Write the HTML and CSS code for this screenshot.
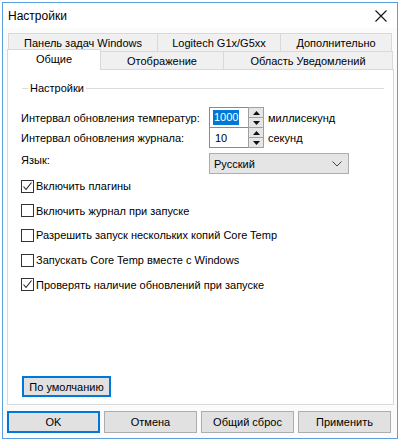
FILE: index.html
```html
<!DOCTYPE html>
<html lang="ru">
<head>
<meta charset="utf-8">
<title>Настройки</title>
<link rel="stylesheet" href="styles.css">
</head>
<body>
<div class="window">
  <div class="titlebar">
    <span class="title">Настройки</span>
    <svg class="close" width="12" height="12" viewBox="0 0 12 12"><path d="M0.5 0.5 L11.5 11.5 M11.5 0.5 L0.5 11.5" stroke="#111" stroke-width="1.1" fill="none"/></svg>
  </div>
  <div class="tabs">
    <div class="tabrow row1">
      <div class="tab w150">Панель задач Windows</div>
      <div class="tab w123">Logitech G1x/G5xx</div>
      <div class="tab w111">Дополнительно</div>
    </div>
    <div class="tabrow row2">
      <div class="tab active w93">Общие</div>
      <div class="tab w123">Отображение</div>
      <div class="tab w168">Область Уведомлений</div>
    </div>
    <div class="panel">
      <div class="group-head"><span class="gline short"></span><span class="glabel">Настройки</span><span class="gline"></span></div>
      <div class="frow first">
        <span class="flabel">Интервал обновления температур:</span>
        <div class="spin">
          <div class="edit"><span class="sel">1000</span></div>
          <div class="spinbtns">
            <div class="sb"><svg width="7" height="4" viewBox="0 0 7 4"><path d="M0 4 L3.5 0 L7 4 Z" fill="#111"/></svg></div>
            <div class="sb"><svg width="7" height="4" viewBox="0 0 7 4"><path d="M0 0 L3.5 4 L7 0 Z" fill="#111"/></svg></div>
          </div>
        </div>
        <span class="unit">миллисекунд</span>
      </div>
      <div class="frow second">
        <span class="flabel">Интервал обновления журнала:</span>
        <div class="spin">
          <div class="edit"><span class="val">10</span></div>
          <div class="spinbtns">
            <div class="sb"><svg width="7" height="4" viewBox="0 0 7 4"><path d="M0 4 L3.5 0 L7 4 Z" fill="#111"/></svg></div>
            <div class="sb"><svg width="7" height="4" viewBox="0 0 7 4"><path d="M0 0 L3.5 4 L7 0 Z" fill="#111"/></svg></div>
          </div>
        </div>
        <span class="unit">секунд</span>
      </div>
      <div class="frow lang">
        <span class="flabel">Язык:</span>
        <div class="select"><span>Русский</span><svg width="10" height="6" viewBox="0 0 10 6"><path d="M0.5 0.5 L5 5 L9.5 0.5" stroke="#444" stroke-width="1" fill="none"/></svg></div>
      </div>
      <div class="checks">
        <div class="cb"><span class="box"><svg width="11" height="11" viewBox="0 0 11 11"><path d="M1.5 5.5 L4 8.5 L9.5 1.5" stroke="#222" stroke-width="1.1" fill="none"/></svg></span>Включить плагины</div>
        <div class="cb"><span class="box"></span>Включить журнал при запуске</div>
        <div class="cb"><span class="box"></span>Разрешить запуск нескольких копий Core Temp</div>
        <div class="cb"><span class="box"></span>Запускать Core Temp вместе с Windows</div>
        <div class="cb"><span class="box"><svg width="11" height="11" viewBox="0 0 11 11"><path d="M1.5 5.5 L4 8.5 L9.5 1.5" stroke="#222" stroke-width="1.1" fill="none"/></svg></span>Проверять наличие обновлений при запуске</div>
      </div>
      <div class="btn default focus">По умолчанию</div>
    </div>
  </div>
  <div class="buttons">
    <div class="btn bb focus">OK</div>
    <div class="btn bb">Отмена</div>
    <div class="btn bb">Общий сброс</div>
    <div class="btn bb">Применить</div>
  </div>
</div>
</body>
</html>
```

FILE: styles.css
```css
* { box-sizing: border-box; }
html, body { margin: 0; padding: 0; background: #ffffff; }
body {
  padding: 2px 0 0 2px;
  font-family: "Liberation Sans", Arial, sans-serif;
  font-size: 11px;
  color: #000;
  white-space: nowrap;
}
.window {
  width: 396px;
  height: 437px;
  border: 1px solid #5a9fe0;
  background: #fbfbfb;
  display: flex;
  flex-direction: column;
}
.titlebar {
  height: 25px;
  background: #ffffff;
  display: flex;
  align-items: center;
  justify-content: space-between;
  padding: 0 10px 0 5px;
}
.title { font-size: 12px; line-height: 16px; }
.close { display: block; margin-top: 1px; }
.tabs {
  margin: 5px 4px 0 4px;
}
.tabrow { display: flex; }
.row1 { height: 18px; padding-left: 1px; }
.row2 { height: 18px; align-items: flex-end; }
.tab {
  height: 18px;
  border: 1px solid #d9d9d9;
  border-bottom: none;
  background: #f0f0f0;
  display: flex;
  align-items: center;
  justify-content: center;
  margin-left: -1px;
}
.tab:first-child { margin-left: 0; }
.tab.active {
  height: 21px;
  margin-bottom: -1px;
  background: #ffffff;
  position: relative;
  z-index: 1;
  padding-bottom: 3px;
}
.w150 { width: 150px; }
.w123 { width: 124px; }
.w111 { width: 112px; }
.w93 { width: 94px; }
.w168 { width: 170px; }
.panel {
  height: 336px;
  width: 387px;
  border: 1px solid #d9d9d9;
  background: #ffffff;
  display: flex;
  flex-direction: column;
  padding: 0 0 7px 0;
}
.group-head {
  margin: 11px 9px 0 14px;
  height: 14px;
  display: flex;
  align-items: center;
}
.gline { flex: 1; height: 1px; background: #dcdcdc; }
.gline.short { flex: 0 0 6px; }
.glabel { padding: 0 2px; line-height: 14px; }
.frow {
  display: flex;
  align-items: center;
  padding-left: 13px;
}
.frow.first { margin-top: 12px; }
.flabel { width: 188px; }
.spin { display: flex; height: 21px; }
.second .spin { margin-top: -1px; }
.edit {
  width: 40px;
  height: 21px;
  border: 1px solid #8a8a8a;
  display: flex;
  align-items: center;
  padding-left: 4px;
}
.sel { background: #0078d7; color: #fff; line-height: 15px; padding: 0 1px; margin-left: -1px; }
.val { padding-left: 1px; }
.spinbtns {
  width: 16px;
  height: 21px;
  display: flex;
  flex-direction: column;
  margin-left: -1px;
}
.sb {
  flex: 1;
  border: 1px solid #a0a0a0;
  background: #e6e6e6;
  display: flex;
  align-items: center;
  justify-content: center;
}
.sb + .sb { border-top: none; }
.sb svg { display: block; }
.unit { margin-left: 4px; }
.frow.lang { margin-top: 5px; align-items: flex-start; }
.lang .flabel { padding-top: 1px; }
.select {
  width: 140px;
  height: 21px;
  border: 1px solid #adadad;
  background: #e5e5e5;
  display: flex;
  align-items: center;
  justify-content: space-between;
  padding: 0 6px 0 4px;
}
.select svg { display: block; }
.checks {
  padding-left: 13px;
  display: flex;
  flex-direction: column;
}
.cb {
  height: 24.6px;
  display: flex;
  align-items: center;
}
.box {
  width: 13px;
  height: 13px;
  border: 1px solid #333;
  background: #fff;
  margin-right: 2px;
  display: flex;
  align-items: center;
  justify-content: center;
}
.box svg { display: block; }
.btn {
  border: 1px solid #adadad;
  background: #e1e1e1;
  display: flex;
  align-items: center;
  justify-content: center;
}
.btn.focus { border: 2px solid #0078d7; }
.default {
  margin-top: auto;
  margin-left: 14px;
  width: 89px;
  height: 21px;
}
.buttons {
  display: flex;
  gap: 4px;
  margin: 6px 0 0 4px;
}
.bb { width: 93px; height: 22px; }
```
